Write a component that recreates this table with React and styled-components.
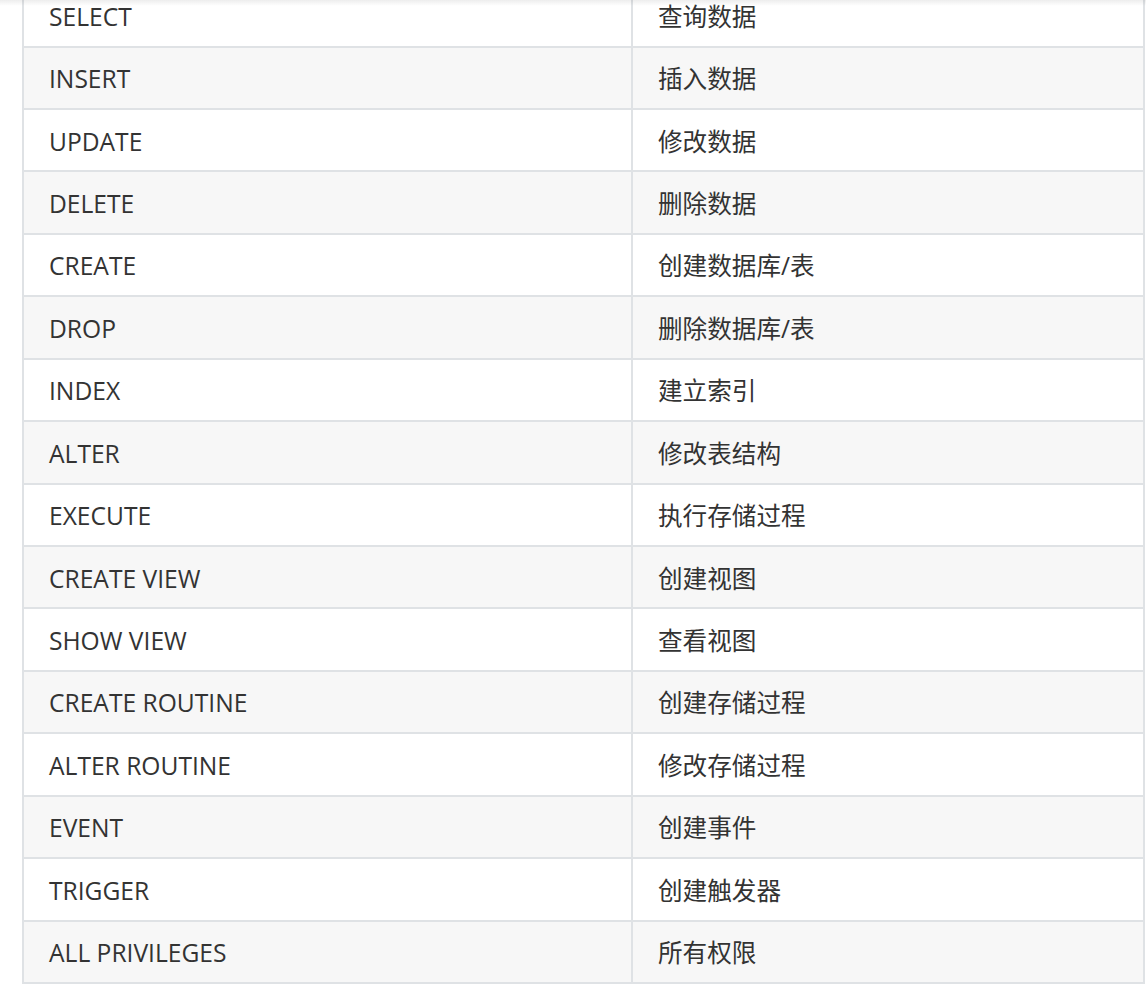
import React from "react";
import styled, { createGlobalStyle } from "styled-components";

const rows = [
  ["SELECT", "查询数据"],
  ["INSERT", "插入数据"],
  ["UPDATE", "修改数据"],
  ["DELETE", "删除数据"],
  ["CREATE", "创建数据库/表"],
  ["DROP", "删除数据库/表"],
  ["INDEX", "建立索引"],
  ["ALTER", "修改表结构"],
  ["EXECUTE", "执行存储过程"],
  ["CREATE VIEW", "创建视图"],
  ["SHOW VIEW", "查看视图"],
  ["CREATE ROUTINE", "创建存储过程"],
  ["ALTER ROUTINE", "修改存储过程"],
  ["EVENT", "创建事件"],
  ["TRIGGER", "创建触发器"],
  ["ALL PRIVILEGES", "所有权限"],
];

const GlobalStyle = createGlobalStyle`
  html, body {
    margin: 0;
    padding: 0;
    background: #ffffff;
  }
  body {
    font-family: "Open Sans", "Noto Sans CJK SC", sans-serif;
    color: #333333;
  }
`;

const Viewport = styled.div`
  position: relative;
  height: 987px;
  overflow: hidden;
  padding-left: 22px;
`;

const TopShade = styled.div`
  position: absolute;
  top: 0;
  left: 0;
  right: 0;
  height: 6px;
  background: linear-gradient(rgba(0, 0, 0, 0.07), rgba(0, 0, 0, 0));
  pointer-events: none;
`;

const Table = styled.table`
  margin-top: -16.8px;
  width: 1121px;
  border-collapse: collapse;
  table-layout: fixed;
  font-size: 24.6px;
`;

const Row = styled.tr`
  background: ${(p) => (p.$striped ? "#f7f7f7" : "#ffffff")};
`;

const Cell = styled.td`
  border: 2px solid #dfe2e5;
  padding: 12.5px 25px 9.5px;
  line-height: 38.42px;
  vertical-align: middle;
  white-space: nowrap;
`;

export default function App() {
  return (
    <Viewport>
      <GlobalStyle />
      <Table>
        <colgroup>
          <col style={{ width: "609px" }} />
          <col style={{ width: "512px" }} />
        </colgroup>
        <tbody>
          {rows.map(([priv, desc], i) => (
            <Row key={priv} $striped={i % 2 === 1}>
              <Cell>{priv}</Cell>
              <Cell>{desc}</Cell>
            </Row>
          ))}
        </tbody>
      </Table>
      <TopShade />
    </Viewport>
  );
}
